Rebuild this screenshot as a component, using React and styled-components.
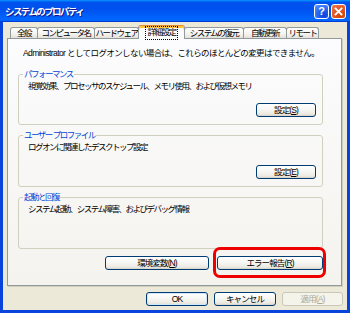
import React from 'react';
import styled, { createGlobalStyle } from 'styled-components';

const GlobalStyle = createGlobalStyle`
  html, body {
    margin: 0;
    padding: 0;
    background: #fff;
  }
  body {
    font-family: "Liberation Sans", "Noto Sans CJK JP", sans-serif;
    font-size: 8.5px;
    letter-spacing: -1.5px;
    color: #000;
  }
`;

const Window = styled.div`
  width: 350px;
  height: 313px;
  display: flex;
  flex-direction: column;
  background: #0843dc;
  box-sizing: border-box;
  overflow: hidden;
`;

const TitleBar = styled.div`
  height: 22px;
  flex: none;
  display: flex;
  align-items: center;
  padding: 0 4px 0 5px;
  background: linear-gradient(180deg, #0997ff 0%, #0053ee 10%, #0050ee 40%, #0066ff 88%, #0066ff 93%, #005bff 95%, #003dd7 97%, #003dd7 100%);
`;

const Title = styled.span`
  flex: 1;
  color: #fff;
  font-weight: bold;
  font-size: 9.5px;
  letter-spacing: -1.6px;
  text-shadow: 1px 1px #0f1089;
`;

const CaptionButton = styled.span`
  width: 15px;
  height: 15px;
  box-sizing: border-box;
  margin-left: 2px;
  border: 1px solid #fff;
  border-radius: 3px;
  display: flex;
  align-items: center;
  justify-content: center;
  color: #fff;
  font-weight: bold;
  font-size: 11px;
  letter-spacing: 0;
  background: ${p => p.$close
    ? 'radial-gradient(circle at 70% 80%, #cc4600 0%, #e0501d 40%, #f17a4c 100%)'
    : 'radial-gradient(circle at 70% 80%, #0a43d8 0%, #2563f0 45%, #5f98ff 100%)'};
`;

const Body = styled.div`
  flex: 1;
  margin: 0 3px 3px;
  padding: 3px 5px 4px 4px;
  background: #ece9d8;
  display: flex;
  flex-direction: column;
`;

const TabRow = styled.div`
  height: 13px;
  display: flex;
  align-items: flex-end;
  padding-left: 3px;
  position: relative;
  z-index: 1;
`;

const Tab = styled.div`
  box-sizing: border-box;
  width: ${p => p.$w}px;
  height: ${p => (p.$active ? '14px' : '11px')};
  margin-bottom: ${p => (p.$active ? '-1px' : '0')};
  border: 1px solid #919b9c;
  border-bottom: none;
  border-top-color: ${p => (p.$active ? '#e68b2c' : '#919b9c')};
  border-radius: 3px 3px 0 0;
  display: flex;
  justify-content: center;
  padding-top: ${p => (p.$active ? '1px' : '0')};
  line-height: 10px;
  white-space: nowrap;
  background: ${p => (p.$active
    ? '#fcfcfe'
    : 'linear-gradient(180deg, #ffffff 0%, #f3f3ef 60%, #e3e1d8 100%)')};
  box-shadow: ${p => (p.$active ? 'inset 0 2px 0 #ffc73c' : 'none')};
  & + & {
    margin-left: -1px;
  }
`;

const FocusText = styled.span`
  outline: 1px dotted #000;
  padding: 0 1px;
`;

const Panel = styled.div`
  flex: 1;
  display: flex;
  flex-direction: column;
  border: 1px solid #919b9c;
  box-shadow: 1px 1px 0 #d0cebf;
  background: linear-gradient(180deg, #fcfcfe 0%, #f4f3ee 100%);
  padding: 9px 18px 0 10px;
`;

const Note = styled.div`
  line-height: 10px;
  margin-left: 5px;
  letter-spacing: -0.6px;
  white-space: nowrap;
`;

const Group = styled.fieldset`
  margin: ${p => (p.$first ? '11px' : '5px')} 0 0;
  padding: 0 6px ${p => p.$pad || 7}px 9px;
  border: 1px solid #d0d0bf;
  border-radius: 3px;
  min-width: 0;
`;

const Legend = styled.legend`
  margin-left: -5px;
  padding: 0 1px;
  line-height: 10px;
  color: #0046d5;
`;

const Desc = styled.div`
  margin-top: 2px;
  line-height: 10px;
  white-space: nowrap;
`;

const ButtonRow = styled.div`
  display: flex;
  justify-content: flex-end;
  gap: ${p => p.$gap || 8}px;
  margin-top: ${p => p.$top || 0}px;
  margin-right: ${p => p.$right || 0}px;
`;

const Button = styled.div`
  position: relative;
  box-sizing: border-box;
  width: ${p => p.$w}px;
  height: 14px;
  border: 1px solid ${p => (p.$disabled ? '#c9c7ba' : '#003c74')};
  border-radius: 3px;
  display: flex;
  align-items: center;
  justify-content: center;
  line-height: 10px;
  letter-spacing: -0.9px;
  color: ${p => (p.$disabled ? '#aca899' : '#000')};
  background: ${p => (p.$disabled
    ? '#f5f4ea'
    : 'linear-gradient(180deg, #ffffff 0%, #f5f5f2 50%, #ebe9e1 85%, #d6d0c5 100%)')};
  box-shadow: ${p => (p.$default ? 'inset 0 0 0 1px #cee7ff' : 'none')};

  ${p => p.$marked && `
    &::after {
      content: '';
      position: absolute;
      left: -5px;
      right: -4px;
      top: -10px;
      bottom: -9px;
      border: 3px solid #ee0000;
      border-radius: 7px;
    }
  `}
`;

const CloseGlyph = () => (
  <svg width="9" height="9" viewBox="0 0 9 9">
    <path d="M1.5 1.5 L7.5 7.5 M7.5 1.5 L1.5 7.5" stroke="#fff" strokeWidth="1.8" strokeLinecap="square" />
  </svg>
);

const tabs = [
  { name: '全般', w: 28 },
  { name: 'コンピュータ名', w: 58 },
  { name: 'ハードウェア', w: 45 },
  { name: '詳細設定', w: 47, active: true },
  { name: 'システムの復元', w: 60 },
  { name: '自動更新', w: 44 },
  { name: 'リモート', w: 33 },
];

function Label({ text, k }) {
  return <span>{text}(<u>{k}</u>)</span>;
}

export default function App() {
  return (
    <>
      <GlobalStyle />
      <Window>
        <TitleBar>
          <Title>システムのプロパティ</Title>
          <CaptionButton>?</CaptionButton>
          <CaptionButton $close><CloseGlyph /></CaptionButton>
        </TitleBar>
        <Body>
          <TabRow>
            {tabs.map(t => (
              <Tab key={t.name} $w={t.w} $active={t.active}>
                {t.active ? <FocusText>{t.name}</FocusText> : t.name}
              </Tab>
            ))}
          </TabRow>
          <Panel>
            <Note>Administrator としてログオンしない場合は、これらのほとんどの変更はできません。</Note>
            <Group $first>
              <Legend>パフォーマンス</Legend>
              <Desc>視覚効果、プロセッサのスケジュール、メモリ使用、および仮想メモリ</Desc>
              <ButtonRow $top={12}>
                <Button $w={60}><Label text="設定" k="S" /></Button>
              </ButtonRow>
            </Group>
            <Group>
              <Legend>ユーザー プロファイル</Legend>
              <Desc>ログオンに関連したデスクトップ設定</Desc>
              <ButtonRow $top={13}>
                <Button $w={60}><Label text="設定" k="E" /></Button>
              </ButtonRow>
            </Group>
            <Group $pad={34}>
              <Legend>起動と回復</Legend>
              <Desc>システム起動、システム障害、およびデバッグ情報</Desc>
            </Group>
            <ButtonRow $top={7}>
              <Button $w={104}><Label text="環境変数" k="N" /></Button>
              <Button $w={106} $marked><Label text="エラー報告" k="R" /></Button>
            </ButtonRow>
          </Panel>
          <ButtonRow $top={6} $gap={6} $right={-1}>
            <Button $w={62} $default>OK</Button>
            <Button $w={62}>キャンセル</Button>
            <Button $w={61} $disabled><Label text="適用" k="A" /></Button>
          </ButtonRow>
        </Body>
      </Window>
    </>
  );
}
